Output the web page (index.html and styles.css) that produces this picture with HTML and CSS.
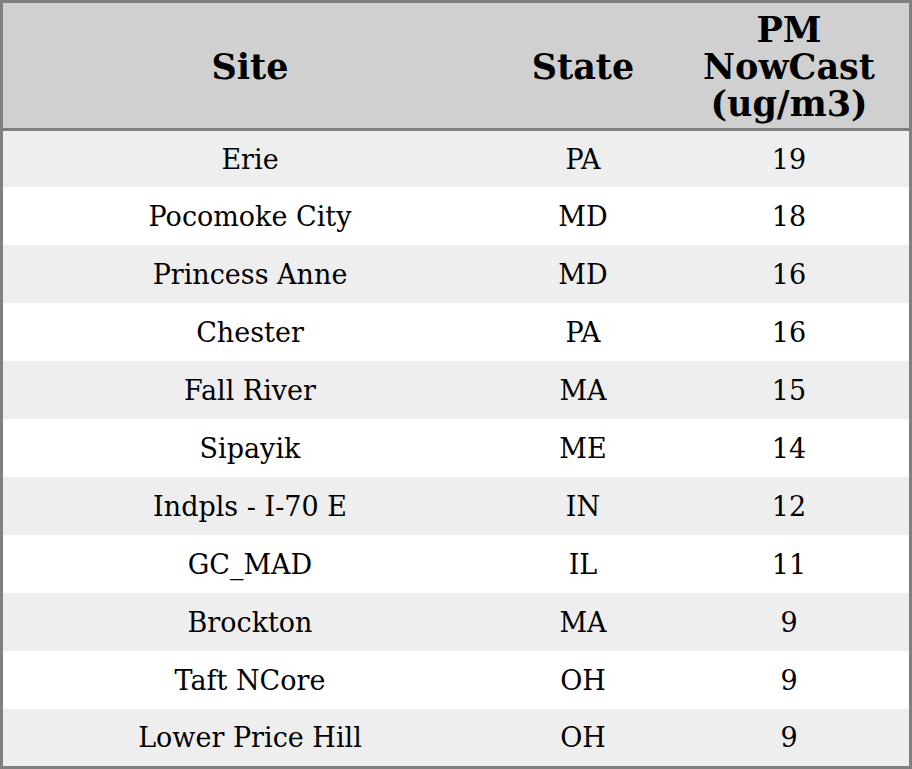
FILE: index.html
```html
<!DOCTYPE html>
<html>
<head>
<meta charset="utf-8">
<link rel="stylesheet" href="styles.css">
</head>
<body>
<table class="aq">
  <colgroup>
    <col class="c-site">
    <col class="c-state">
    <col class="c-pm">
  </colgroup>
  <thead>
    <tr><th>Site</th><th>State</th><th>PM<br>NowCast<br>(ug/m3)</th></tr>
  </thead>
  <tbody>
    <tr class="first"><td>Erie</td><td>PA</td><td>19</td></tr>
    <tr><td>Pocomoke City</td><td>MD</td><td>18</td></tr>
    <tr><td>Princess Anne</td><td>MD</td><td>16</td></tr>
    <tr><td>Chester</td><td>PA</td><td>16</td></tr>
    <tr><td>Fall River</td><td>MA</td><td>15</td></tr>
    <tr><td>Sipayik</td><td>ME</td><td>14</td></tr>
    <tr><td>Indpls - I-70 E</td><td>IN</td><td>12</td></tr>
    <tr><td>GC_MAD</td><td>IL</td><td>11</td></tr>
    <tr><td>Brockton</td><td>MA</td><td>9</td></tr>
    <tr><td>Taft NCore</td><td>OH</td><td>9</td></tr>
    <tr class="last"><td>Lower Price Hill</td><td>OH</td><td>9</td></tr>
  </tbody>
</table>
</body>
</html>
```
FILE: styles.css
```css
html, body {
  margin: 0;
  padding: 0;
  background: #ffffff;
}
.aq {
  width: 912px;
  border-collapse: separate;
  border-spacing: 0;
  border: 3px solid #808080;
  box-sizing: border-box;
  font-family: "DejaVu Serif", serif;
  color: #000;
  table-layout: fixed;
}
.c-site { width: 494px; }
.c-state { width: 172px; }
.c-pm { width: 240px; }
.aq th {
  background: #d0d0d0;
  font-size: 35px;
  font-weight: bold;
  line-height: 37px;
  height: 128px;
  padding: 2px 0 0 0;
  text-align: center;
  vertical-align: middle;
  border-bottom: 3px solid #808080;
  box-sizing: border-box;
}
.aq td {
  font-size: 27px;
  height: 58px;
  padding: 0;
  text-align: center;
  vertical-align: middle;
  box-sizing: border-box;
}
.aq tbody tr:nth-child(odd) td { background: #eeeeee; }
.aq tbody tr:nth-child(even) td { background: #ffffff; }
.aq tbody tr.first td { height: 56px; }
.aq tbody tr.last td { height: 57px; }
```
